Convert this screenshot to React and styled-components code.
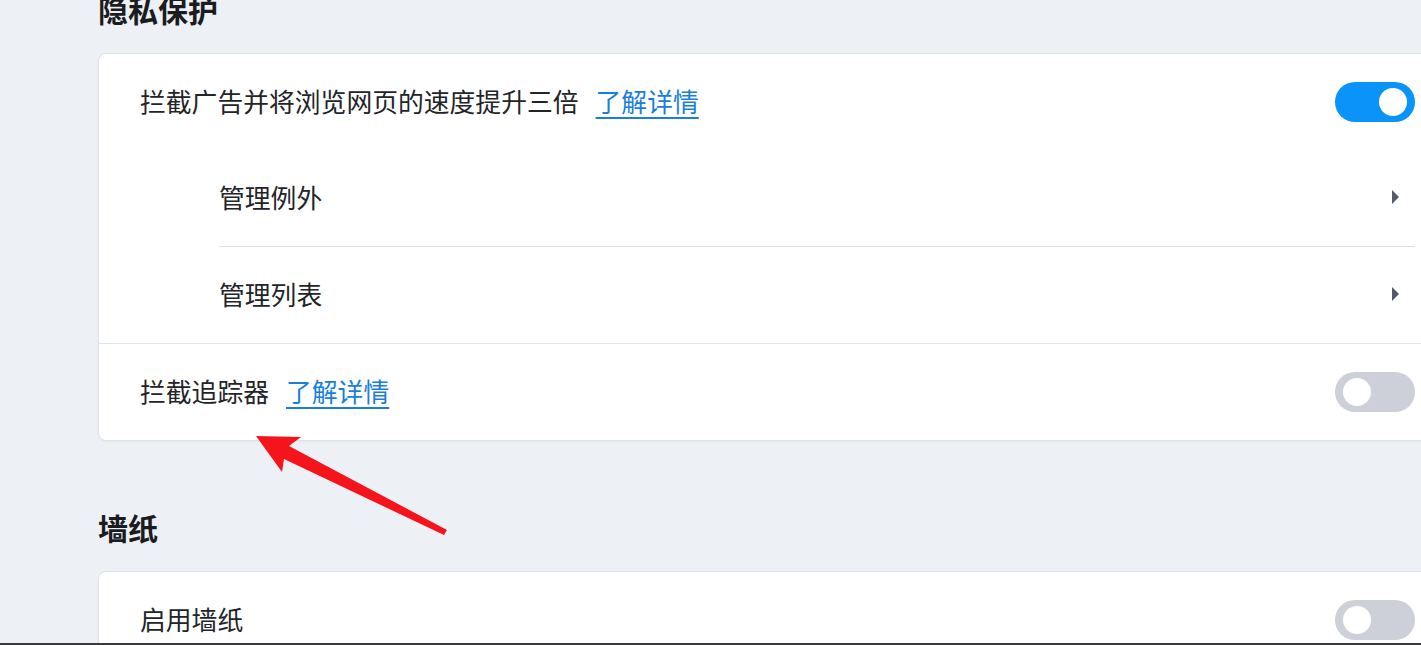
import React from "react";
import styled, { createGlobalStyle } from "styled-components";

const Global = createGlobalStyle`
  html, body {
    margin: 0;
    padding: 0;
    background: #edf1f5;
    overflow: hidden;
  }
  body {
    font-family: "Noto Sans CJK SC", "Noto Sans", sans-serif;
    color: #222428;
  }
`;

const Page = styled.div`
  width: 1421px;
  height: 645px;
  overflow: hidden;
  position: relative;
`;

const Content = styled.div`
  margin-top: -11px;
  padding-left: 98px;
  display: flex;
  flex-direction: column;
  gap: 66px;
`;

const Section = styled.section`
  width: 1338px;
  display: flex;
  flex-direction: column;
  gap: 24px;
`;

const Title = styled.h2`
  margin: 0;
  font-size: 30px;
  line-height: 40px;
  font-weight: 700;
  color: #1b1c1f;
`;

const Card = styled.div`
  background: #fff;
  border: 1px solid #dde2e8;
  border-radius: 8px;
  box-shadow: 0 1px 2px rgba(20, 30, 50, 0.04);
  display: flex;
  flex-direction: column;
`;

const Row = styled.div`
  height: 96px;
  display: flex;
  align-items: center;
  padding: 0 20px 0 41px;
  border-top: ${(p) => (p.$divider ? "1px solid #dfe4e9" : "none")};
`;

const SubList = styled.div`
  margin: 0 20px 0 120px;
  display: flex;
  flex-direction: column;
`;

const SubRow = styled.div`
  height: 96px;
  display: flex;
  align-items: center;
  border-top: ${(p) => (p.$divider ? "1px solid #dbe1e7" : "none")};
  padding-right: 16px;
`;

const Label = styled.span`
  font-size: 25.8px;
  line-height: 34px;
  color: #222428;
  flex: 1;
  display: flex;
  align-items: center;
  margin-top: -2px;
`;

const Link = styled.a`
  margin-left: 17px;
  color: #1a7fdc;
  text-decoration: underline;
  text-underline-offset: 5px;
  text-decoration-thickness: 2px;
  cursor: pointer;
`;

const Toggle = styled.div`
  width: 80px;
  height: 40px;
  border-radius: 20px;
  background: ${(p) => (p.$on ? "#0a93f8" : "#cdd0d8")};
  position: relative;
  flex-shrink: 0;
  &::after {
    content: "";
    position: absolute;
    top: 6px;
    left: ${(p) => (p.$on ? "44px" : "8px")};
    width: 28px;
    height: 28px;
    border-radius: 50%;
    background: #fff;
  }
`;

const Caret = styled.span`
  width: 0;
  height: 0;
  border-top: 7.5px solid transparent;
  border-bottom: 7.5px solid transparent;
  border-left: 7px solid #555a66;
  margin-top: -3px;
`;

const BottomLine = styled.div`
  position: absolute;
  left: 0;
  right: 0;
  bottom: 0;
  height: 2px;
  background: #3a3a3c;
`;

const ArrowSvg = styled.svg`
  position: absolute;
  left: 0;
  top: 0;
  pointer-events: none;
`;

export default function App() {
  return (
    <Page>
      <Global />
      <Content>
        <Section>
          <Title>隐私保护</Title>
          <Card>
            <Row>
              <Label>
                拦截广告并将浏览网页的速度提升三倍
                <Link>了解详情</Link>
              </Label>
              <Toggle $on />
            </Row>
            <SubList>
              <SubRow>
                <Label>管理例外</Label>
                <Caret />
              </SubRow>
              <SubRow $divider>
                <Label>管理列表</Label>
                <Caret />
              </SubRow>
            </SubList>
            <Row $divider>
              <Label>
                拦截追踪器
                <Link>了解详情</Link>
              </Label>
              <Toggle />
            </Row>
          </Card>
        </Section>
        <Section>
          <Title>墙纸</Title>
          <Card>
            <Row>
              <Label>启用墙纸</Label>
              <Toggle />
            </Row>
          </Card>
        </Section>
      </Content>
      <ArrowSvg width="1421" height="645" viewBox="0 0 1421 645">
        <polygon
          points="256,436 301,437 289,446 447,530 444,535 284,459 282,472"
          fill="#f5141b"
        />
      </ArrowSvg>
      <BottomLine />
    </Page>
  );
}
